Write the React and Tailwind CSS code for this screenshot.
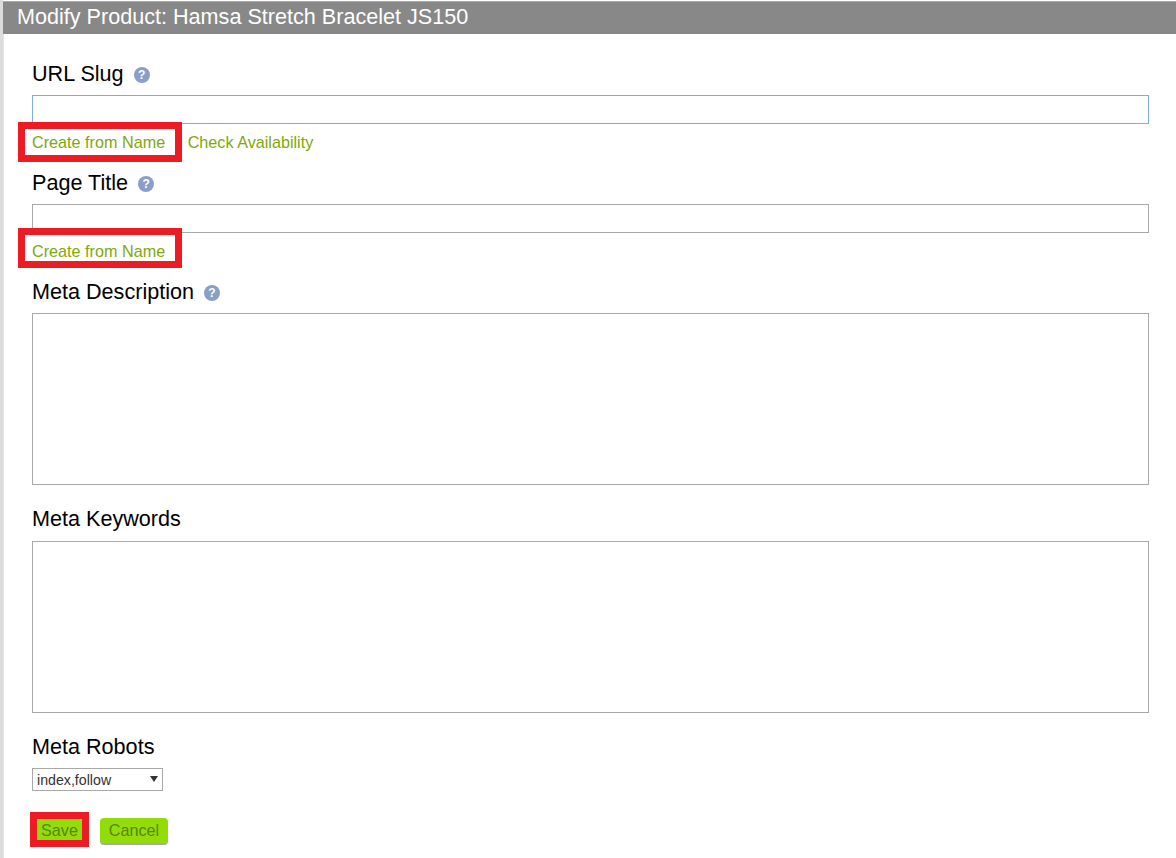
// Modify Product - SEO tab
const font = { fontFamily: '"Liberation Sans", Arial, sans-serif' };

const Help = () => (
  <span className="ml-[10px] mt-[2px] inline-flex h-4 w-4 items-center justify-center rounded-full bg-[#8a9fc7] text-[12px] font-bold leading-none text-white">?</span>
);

const Label = ({ children, help, className }) => (
  <div className={`flex h-[23px] items-center pb-[2px] text-[21.6px] leading-[23px] text-black ${className}`}>
    {children}
    {help && <Help />}
  </div>
);

// red annotation box drawn over the link
const Marked = ({ children, box }) => (
  <span className="relative inline-flex h-[18px] items-center">
    {children}
    <span className={`absolute -left-[14px] -right-[17px] border-[7px] border-[#ed1c24] ${box}`}></span>
  </span>
);

const Link = ({ children }) => (
  <a href="#" className="text-[16.2px] leading-[18px] text-[#7fa80a]">{children}</a>
);

export default function App() {
  return (
    <div className="h-[858px] overflow-hidden border-l-[3px] border-[#dcdcdc] bg-white" style={font}>
      <div className="mt-px h-[33px] border-t border-[#a8a8a8] bg-[#888888] pl-[14px] text-[21.6px] leading-[30px] text-white">
        Modify Product: Hamsa Stretch Bracelet JS150
      </div>

      <div className="h-[824px] border-l border-[#e4e4e4] pl-[28px] pr-[27px]">
        <Label help className="pt-[29px] h-[52px]">URL Slug</Label>
        <input type="text" className="mt-[9px] block h-[29px] w-full border border-[#7eaaec] bg-white outline-none" />
        <div className="mt-[9px] flex h-[18px] items-center gap-[22.5px]">
          <Marked box="-top-[11px] -bottom-[11px]"><Link>Create from Name</Link></Marked>
          <Link>Check Availability</Link>
        </div>

        <Label help className="mt-[21px]">Page Title</Label>
        <input type="text" className="mt-[9px] block h-[29px] w-full border border-[#a9a9a9] bg-white outline-none" />
        <div className="mt-[9px] flex h-[18px] items-center">
          <Marked box="-top-[14px] -bottom-[8px]"><Link>Create from Name</Link></Marked>
        </div>

        <Label help className="mt-[21px]">Meta Description</Label>
        <textarea className="mt-[9px] block h-[172px] w-full resize-none border border-[#a9a9a9] bg-white outline-none"></textarea>

        <Label className="mt-[23px]">Meta Keywords</Label>
        <textarea className="mt-[10px] block h-[172px] w-full resize-none border border-[#a9a9a9] bg-white outline-none"></textarea>

        <Label className="mt-[23px]">Meta Robots</Label>
        <div className="relative mt-[9px] flex h-[23px] w-[131px] items-center border border-[#a9a9a9] bg-white pl-1 pt-[2px] text-[14.2px] text-[#333333]">
          index,follow
          <svg className="absolute right-[4px] top-[7px]" width="8" height="6" viewBox="0 0 8 6">
            <path d="M0 0h8L4 6z" fill="#333333" />
          </svg>
        </div>

        <div className="mt-[27px] flex items-center">
          <span className="relative mb-[2px] ml-[5px] mr-[18px] flex h-[21px] w-[45px] items-center justify-center bg-[#92dc0a] pt-[2px] text-[16.2px] text-[#5a8500]">
            Save
            <span className="absolute -inset-[7px] border-[7px] border-[#ed1c24]"></span>
          </span>
          <button className="h-[25px] w-[68px] rounded-[4px] bg-[#92dc0a] text-[16.2px] text-[#5a8500] shadow-[0_2px_0_#a9a9a9]">Cancel</button>
        </div>
      </div>
    </div>
  );
}
